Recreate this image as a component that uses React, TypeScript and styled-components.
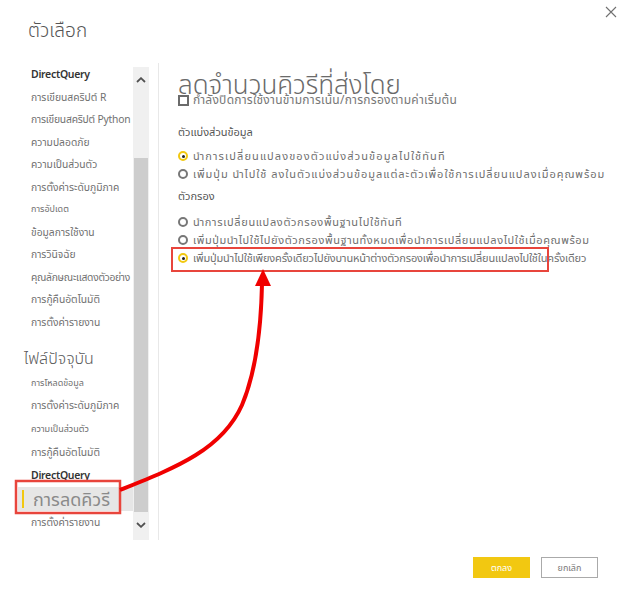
import React from "react";
import styled, { createGlobalStyle } from "styled-components";

const GlobalStyle = createGlobalStyle`
  html, body { margin: 0; padding: 0; background: #ffffff; }
  body {
    font-family: "Noto Sans", "Noto Sans Thai", "DejaVu Sans", sans-serif;
    color: #666666;
  }
  * { box-sizing: border-box; }
`;

const Page = styled.div`
  position: relative;
  width: 624px;
  height: 601px;
  background: #fff;
  display: flex;
  flex-direction: column;
  overflow: hidden;
`;

const Header = styled.div`
  height: 63px;
  display: flex;
  justify-content: space-between;
  align-items: flex-start;
  padding-left: 28px;
  padding-right: 6px;
`;

const Title = styled.h1`
  margin: 16px 0 0 0;
  font-size: 19px;
  line-height: 28px;
  font-weight: 300;
  color: #555;
`;

const CloseButton = styled.button`
  margin-top: 5px;
  width: 14px;
  height: 14px;
  padding: 0;
  border: none;
  background: transparent;
  display: flex;
  align-items: center;
  justify-content: center;
`;

const Body = styled.div`
  display: flex;
  height: 477px;
`;

const Sidebar = styled.nav`
  width: 149px;
  display: flex;
`;

const NavList = styled.div`
  width: 133px;
  overflow: hidden;
  display: flex;
  flex-direction: column;
`;

const NavHeading = styled.div`
  margin-top: 12px;
  height: 26px;
  line-height: 26px;
  padding-left: 24px;
  font-size: 16px;
  font-weight: 300;
  color: #5a5a5a;
  white-space: nowrap;
`;

const NavItem = styled.div<{
  $h: number;
  $small?: boolean;
  $strong?: boolean;
  $selected?: boolean;
  $ls?: number;
}>`
  position: relative;
  height: ${(p) => p.$h}px;
  line-height: ${(p) => p.$h}px;
  white-space: nowrap;
  font-size: ${(p) => (p.$selected ? 18 : p.$small ? 9 : p.$strong ? 10.5 : 10.3)}px;
  font-weight: ${(p) => (p.$strong ? 600 : 400)};
  letter-spacing: ${(p) => (p.$strong ? -0.3 : p.$ls ?? 0)}px;
  color: ${(p) => (p.$strong ? "#333" : p.$selected ? "#8a8a8a" : "#707070")};
  background: ${(p) => (p.$selected ? "#e6e6e6" : "transparent")};
  margin-left: ${(p) => (p.$selected ? 18 : 0)}px;
  padding-left: ${(p) => (p.$selected ? 15 : 31)}px;
  &::before {
    content: "";
    display: ${(p) => (p.$selected ? "block" : "none")};
    position: absolute;
    left: 4px;
    top: 3px;
    bottom: 3px;
    width: 2px;
    background: #f2c811;
  }
`;

const ScrollTrack = styled.div`
  margin-top: 4px;
  width: 16px;
  height: 473px;
  background: #f0f0f0;
  display: flex;
  flex-direction: column;
  align-items: center;
`;

const ScrollArrow = styled.div`
  height: 26px;
  width: 16px;
  display: flex;
  align-items: center;
  justify-content: center;
`;

const ScrollThumb = styled.div`
  margin-top: 65px;
  width: 14px;
  height: 354px;
  background: #cdcdcd;
`;

const Divider = styled.div`
  margin-left: 9px;
  width: 1px;
  height: 477px;
  background: #e8e8e8;
`;

const Main = styled.main`
  flex: 1;
  padding-left: 19px;
  display: flex;
  flex-direction: column;
`;

const MainTitle = styled.h2`
  margin: 8px 0 0 0;
  height: 26px;
  line-height: 26px;
  font-size: 26px;
  font-weight: 300;
  color: #6a6a6a;
  white-space: nowrap;
`;

const CheckRow = styled.label`
  margin-top: -4px;
  height: 14px;
  display: flex;
  align-items: center;
  gap: 4px;
  font-size: 12px;
  letter-spacing: 0.25px;
  color: #777;
  white-space: nowrap;
`;

const CheckBox = styled.span`
  width: 11px;
  height: 11px;
  border: 2px solid #6b6b6b;
  flex: none;
`;

const SectionLabel = styled.div<{ $mt: number }>`
  margin-top: ${(p) => p.$mt}px;
  height: 18px;
  line-height: 18px;
  font-size: 11px;
  color: #555;
`;

const RadioGroup = styled.div<{ $mt: number }>`
  margin-top: ${(p) => p.$mt}px;
  display: flex;
  flex-direction: column;
`;

const RadioRow = styled.label<{ $ls: number }>`
  height: 18px;
  display: flex;
  align-items: center;
  gap: 5px;
  font-size: 11px;
  letter-spacing: ${(p) => p.$ls}px;
  color: #6f6f6f;
  white-space: nowrap;
`;

const RadioDot = styled.span<{ $on?: boolean }>`
  position: relative;
  width: 10px;
  height: 10px;
  border-radius: 50%;
  flex: none;
  border: 2px solid ${(p) => (p.$on ? "#f2c811" : "#777")};
  background: #fff;
  &::after {
    content: "";
    display: ${(p) => (p.$on ? "block" : "none")};
    position: absolute;
    left: 1.5px;
    top: 1.5px;
    width: 3px;
    height: 3px;
    border-radius: 50%;
    background: #222;
  }
`;

const Footer = styled.div`
  flex: 1;
  display: flex;
  justify-content: flex-end;
  align-items: flex-start;
  padding-top: 17px;
  padding-right: 26px;
  gap: 11px;
`;

const Button = styled.button<{ $primary?: boolean }>`
  width: 57px;
  height: 21px;
  padding: 0;
  font-family: inherit;
  font-size: 9px;
  border: ${(p) => (p.$primary ? "1px solid #f2c811" : "1px solid #aaa")};
  background: ${(p) => (p.$primary ? "#f2c811" : "#fff")};
  color: ${(p) => (p.$primary ? "#fff" : "#777")};
`;

const Overlay = styled.svg`
  position: absolute;
  left: 0;
  top: 0;
  pointer-events: none;
`;

const Chevron = ({ up }: { up?: boolean }) => (
  <svg width="10" height="6" viewBox="0 0 10 6">
    <path
      d={up ? "M1 5 L5 1.2 L9 5" : "M1 1 L5 4.8 L9 1"}
      fill="none"
      stroke="#505050"
      strokeWidth="1.8"
    />
  </svg>
);

type Item = { text: string; small?: boolean; strong?: boolean; selected?: boolean; ls?: number };

const appItems: Item[] = [
  { text: "DirectQuery", strong: true },
  { text: "การเขียนสคริปต์ R" },
  { text: "การเขียนสคริปต์ Python", ls: -0.2 },
  { text: "ความปลอดภัย" },
  { text: "ความเป็นส่วนตัว" },
  { text: "การตั้งค่าระดับภูมิภาค" },
  { text: "การอัปเดต", small: true },
  { text: "ข้อมูลการใช้งาน" },
  { text: "การวินิจฉัย" },
  { text: "คุณลักษณะแสดงตัวอย่าง", ls: -0.3 },
  { text: "การกู้คืนอัตโนมัติ" },
  { text: "การตั้งค่ารายงาน" },
];

const fileItems: Item[] = [
  { text: "การโหลดข้อมูล", small: true },
  { text: "การตั้งค่าระดับภูมิภาค" },
  { text: "ความเป็นส่วนตัว", small: true },
  { text: "การกู้คืนอัตโนมัติ" },
  { text: "DirectQuery", strong: true },
  { text: "การลดคิวรี", selected: true },
  { text: "การตั้งค่ารายงาน" },
];

export default function App() {
  return (
    <>
      <GlobalStyle />
      <Page>
        <Header>
          <Title>ตัวเลือก</Title>
          <CloseButton aria-label="ปิด">
            <svg width="12" height="12" viewBox="0 0 12 12">
              <path d="M1 1 L11 11 M11 1 L1 11" stroke="#707070" strokeWidth="1.1" />
            </svg>
          </CloseButton>
        </Header>
        <Body>
          <Sidebar>
            <NavList>
              {appItems.map((it, i) => (
                <NavItem key={"a" + i} $h={22.5} $small={it.small} $strong={it.strong} $ls={it.ls}>
                  {it.text}
                </NavItem>
              ))}
              <NavHeading>ไฟล์ปัจจุบัน</NavHeading>
              {fileItems.map((it, i) => (
                <NavItem
                  key={"f" + i}
                  $h={it.selected ? 24 : 23.2}
                  $small={it.small}
                  $strong={it.strong}
                  $selected={it.selected}
                  $ls={it.ls}
                >
                  {it.text}
                </NavItem>
              ))}
            </NavList>
            <ScrollTrack>
              <ScrollArrow>
                <Chevron up />
              </ScrollArrow>
              <ScrollThumb />
              <ScrollArrow>
                <Chevron />
              </ScrollArrow>
            </ScrollTrack>
          </Sidebar>
          <Divider />
          <Main>
            <MainTitle>ลดจำนวนคิวรีที่ส่งโดย</MainTitle>
            <CheckRow>
              <CheckBox />
              กำลังปิดการใช้งานข้ามการเน้น/การกรองตามค่าเริ่มต้น
            </CheckRow>
            <SectionLabel $mt={16}>ตัวแบ่งส่วนข้อมูล</SectionLabel>
            <RadioGroup $mt={6}>
              <RadioRow $ls={1.1}>
                <RadioDot $on />
                นำการเปลี่ยนแปลงของตัวแบ่งส่วนข้อมูลไปใช้ทันที
              </RadioRow>
              <RadioRow $ls={0.95}>
                <RadioDot />
                เพิ่มปุ่ม นำไปใช้ ลงในตัวแบ่งส่วนข้อมูลแต่ละตัวเพื่อใช้การเปลี่ยนแปลงเมื่อคุณพร้อม
              </RadioRow>
            </RadioGroup>
            <SectionLabel $mt={4}>ตัวกรอง</SectionLabel>
            <RadioGroup $mt={8}>
              <RadioRow $ls={0.65}>
                <RadioDot />
                นำการเปลี่ยนแปลงตัวกรองพื้นฐานไปใช้ทันที
              </RadioRow>
              <RadioRow $ls={0.6}>
                <RadioDot />
                เพิ่มปุ่มนำไปใช้ไปยังตัวกรองพื้นฐานทั้งหมดเพื่อนำการเปลี่ยนแปลงไปใช้เมื่อคุณพร้อม
              </RadioRow>
              <RadioRow $ls={-0.15}>
                <RadioDot $on />
                เพิ่มปุ่มนำไปใช้เพียงครั้งเดียวไปยังบานหน้าต่างตัวกรองเพื่อนำการเปลี่ยนแปลงไปใช้ในครั้งเดียว
              </RadioRow>
            </RadioGroup>
          </Main>
        </Body>
        <Footer>
          <Button $primary>ตกลง</Button>
          <Button>ยกเลิก</Button>
        </Footer>
        <Overlay width="624" height="601" viewBox="0 0 624 601">
          <rect x="16" y="481" width="104" height="32" fill="none" stroke="#e8453c" strokeWidth="2.5" />
          <rect x="172" y="248" width="376" height="23" fill="none" stroke="#e8453c" strokeWidth="2" />
          <path
            d="M120 490 C175 468 222 450 242 405 C256 372 261 330 262 284"
            fill="none"
            stroke="#f00000"
            strokeWidth="4"
          />
          <polygon points="263,269 255,286 271,286" fill="#f00000" />
        </Overlay>
      </Page>
    </>
  );
}
